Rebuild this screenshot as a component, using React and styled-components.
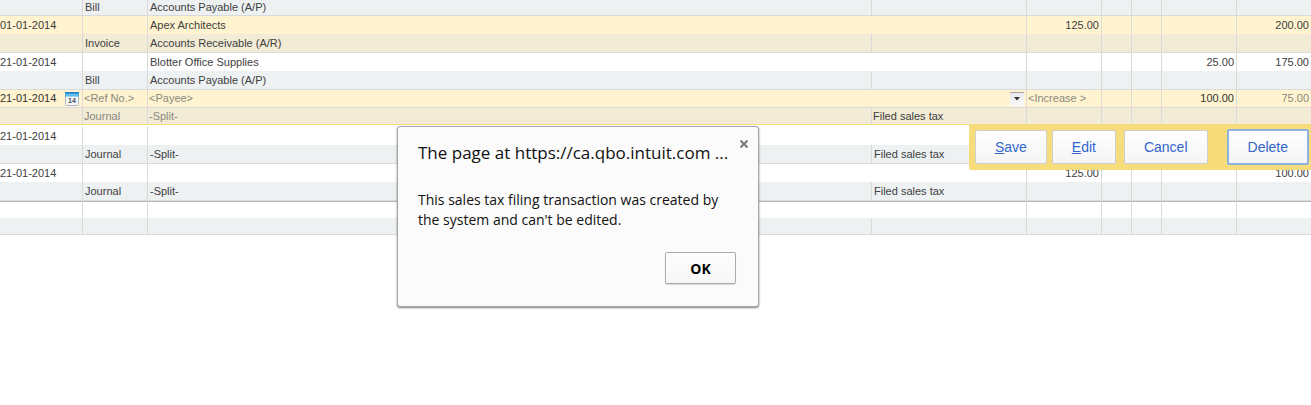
import React, { Fragment } from 'react';
import styled, { createGlobalStyle } from 'styled-components';

const GlobalStyle = createGlobalStyle`
  *, *::before, *::after {
    box-sizing: border-box;
  }

  body {
    margin: 0;
    background: #fff;
    color: #404040;
    font-family: "Liberation Sans", Arial, sans-serif;
    font-size: 11px;
    overflow-x: hidden;
  }
`;

const Page = styled.main`
  position: relative;
  min-height: 100vh;
`;

const Register = styled.table`
  width: 100%;
  table-layout: fixed;
  border-collapse: separate;
  border-spacing: 0;
`;

const Col = styled.col`
  width: ${({ $width }) => ($width ? `${$width}px` : 'auto')};
`;

const backgrounds = {
  plain: ['#fff', '#edf1f2'],
  selected: ['#fff4cf', '#f2ebd5'],
};

const Row = styled.tr`
  height: ${({ $height }) => $height || 18}px;
  line-height: ${({ $height }) => $height || 18}px;
  background: ${({ $tone = 'plain', $sub }) => backgrounds[$tone][$sub ? 1 : 0]};

  > td {
    border-bottom: ${({ $line }) => ($line ? `1px solid ${$line}` : '0')};
    border-top: ${({ $topLine }) => ($topLine ? `1px solid ${$topLine}` : '0')};
  }
`;

const Cell = styled.td`
  position: relative;
  padding: 0 2px;
  border-right: 1px solid #dadada;
  white-space: nowrap;
  text-align: ${({ $right }) => ($right ? 'right' : 'left')};
  color: ${({ $muted }) => ($muted ? '#8a8880' : 'inherit')};

  &:first-child {
    padding-left: 0;
  }

  &:last-child {
    border-right: 0;
  }
`;

const EditCell = styled(Cell)`
  padding: 0 2px 0 1px;
`;

const Field = styled.div`
  display: flex;
  align-items: center;
  gap: 4px;
  height: 17px;
`;

const DateField = styled(Field)`
  padding-right: 1px;
`;

const TextInput = styled.input`
  flex: 1;
  width: 100%;
  min-width: 0;
  height: 16px;
  padding: 0;
  border: 0;
  outline: 0;
  background: transparent;
  color: #333;
  font: inherit;
  text-align: ${({ $right }) => ($right ? 'right' : 'left')};

  &::placeholder {
    color: #8a8880;
    opacity: 1;
  }
`;

const IconButton = styled.button`
  display: flex;
  padding: 0;
  border: 0;
  background: transparent;
  cursor: pointer;
`;

const DropButton = styled(IconButton)`
  align-items: center;
  justify-content: center;
  width: 14px;
  height: 14px;
  border-top: 1px solid #a5a5a5;
  background: linear-gradient(#e9e9ee, #fbfbfb);
`;

const Divider = styled.td`
  height: 2px;
  padding: 0;
  border-bottom: 1px solid #dadada;
`;

const ActionBar = styled.div`
  position: absolute;
  top: 100%;
  right: 0;
  z-index: 1;
  display: flex;
  align-items: center;
  padding: 5px 2px 5px 6px;
  border-radius: 0 0 0 2px;
  background: #f6dc7a;
`;

const ActionButton = styled.button`
  height: ${({ $focused }) => ($focused ? 36 : 34)}px;
  margin-right: ${({ $gap = 0 }) => $gap}px;
  padding: 0 19px;
  border: ${({ $focused }) => ($focused ? '2px solid #8fb1dd' : '1px solid #cfcfd4')};
  border-radius: 2px;
  background: linear-gradient(#fff, #f4f4f4);
  color: #3366cc;
  font-family: inherit;
  font-size: 14px;
  cursor: pointer;
`;

const Dialog = styled.section`
  position: absolute;
  top: 126px;
  left: 397px;
  z-index: 2;
  width: 362px;
  padding: 14px 22px 22px 20px;
  border: 1px solid #a6a6a6;
  border-radius: 3px;
  background: #fbfbfb;
  box-shadow: 0 1px 2px rgba(0, 0, 0, 0.5);
  color: #111;
  font-family: "Open Sans", "Segoe UI", sans-serif;
`;

const DialogTitle = styled.h1`
  margin: 0;
  font-size: 17px;
  font-weight: 400;
  line-height: 24px;
  white-space: nowrap;
`;

const DialogText = styled.p`
  margin: 25px 0 22px;
  font-size: 14px;
  line-height: 20px;
`;

const DialogFooter = styled.footer`
  display: flex;
  justify-content: flex-end;
`;

const OkButton = styled.button`
  width: 71px;
  height: 32px;
  border: 1px solid #aaa;
  border-radius: 2px;
  background: linear-gradient(#fdfdfd, #f7f7f7);
  box-shadow: 0 1px 1px rgba(0, 0, 0, 0.15);
  color: #000;
  font-family: inherit;
  font-size: 14px;
  font-weight: 700;
`;

const CloseButton = styled(IconButton)`
  position: absolute;
  top: 13px;
  right: 10px;
`;

const lineColor = '#dadada';
const editLine = '#f6dc7a';

const columns = [83, 65, null, 155, 75, 30, 30, 75, 74];

const CalendarIcon = () => (
  <svg width="14" height="14" viewBox="0 0 14 14" aria-hidden="true">
    <rect x="0.5" y="1" width="13" height="12.5" rx="1" fill="#f3f5f8" stroke="#b3b8c0" />
    <rect x="0" y="0" width="14" height="4.5" fill="#45aee9" />
    <rect x="0" y="0" width="14" height="1.5" fill="#2782c8" />
    <path d="M1 3h12" stroke="#83d2f8" />
    <text x="7" y="11" textAnchor="middle" fontFamily="Liberation Sans" fontSize="7" fontWeight="700" fill="#4b5260">14</text>
  </svg>
);

const Transaction = ({ date, type, payee, account, memo, increase, decrease, balance, tone }) => (
  <tbody>
    <Row $tone={tone}>
      <Cell>{date}</Cell>
      <Cell />
      <Cell colSpan={2}>{payee}</Cell>
      <Cell $right>{increase}</Cell>
      <Cell />
      <Cell />
      <Cell $right>{decrease}</Cell>
      <Cell $right>{balance}</Cell>
    </Row>
    <DetailRow type={type} account={account} memo={memo} tone={tone} />
  </tbody>
);

const DetailRow = ({ type, account, memo, tone, height, line = lineColor }) => (
  <Row $sub $tone={tone} $height={height} $line={line}>
    <Cell />
    <Cell>{type}</Cell>
    <Cell>{account}</Cell>
    <Cell>{memo}</Cell>
    <Cell />
    <Cell />
    <Cell />
    <Cell />
    <Cell />
  </Row>
);

const Actions = () => (
  <ActionBar>
    <ActionButton type="button" $gap={5}><u>S</u>ave</ActionButton>
    <ActionButton type="button" $gap={8}><u>E</u>dit</ActionButton>
    <ActionButton type="button" $gap={19}>Cancel</ActionButton>
    <ActionButton type="button" $focused>Delete</ActionButton>
  </ActionBar>
);

const EditTransaction = () => (
  <tbody>
    <Row $tone="selected" $height={17} $line={lineColor}>
      <EditCell>
        <DateField>
          <TextInput aria-label="Date" defaultValue="21-01-2014" />
          <IconButton type="button" aria-label="Choose date"><CalendarIcon /></IconButton>
        </DateField>
      </EditCell>
      <EditCell>
        <Field><TextInput aria-label="Reference number" placeholder="<Ref No.>" /></Field>
      </EditCell>
      <EditCell colSpan={2}>
        <Field>
          <TextInput aria-label="Payee" placeholder="<Payee>" />
          <DropButton type="button" aria-label="Show payees">
            <svg width="6" height="4" viewBox="0 0 6 4" aria-hidden="true">
              <path d="M0 0h6L3 3.5z" fill="#333" />
            </svg>
          </DropButton>
        </Field>
      </EditCell>
      <EditCell>
        <Field><TextInput aria-label="Increase" placeholder="<Increase >" /></Field>
      </EditCell>
      <EditCell />
      <EditCell />
      <EditCell>
        <Field><TextInput aria-label="Decrease" defaultValue="100.00" $right /></Field>
      </EditCell>
      <EditCell $right $muted>75.00</EditCell>
    </Row>
    <Row $sub $tone="selected" $height={16} $line={editLine}>
      <EditCell />
      <EditCell $muted>Journal</EditCell>
      <EditCell $muted>-Split-</EditCell>
      <EditCell>Filed sales tax</EditCell>
      <EditCell />
      <EditCell />
      <EditCell />
      <EditCell />
      <EditCell>
        <Actions />
      </EditCell>
    </Row>
    <Row $height={2}>
      <Divider colSpan={9} />
    </Row>
  </tbody>
);

const BlankTransaction = () => (
  <tbody>
    <Row $height={17} $topLine="#b9b9b9">
      <Cell />
      <Cell />
      <Cell colSpan={2} />
      <Cell />
      <Cell />
      <Cell />
      <Cell />
      <Cell />
    </Row>
    <DetailRow height={17} />
  </tbody>
);

const Alert = () => (
  <Dialog role="alertdialog" aria-labelledby="alert-title" aria-describedby="alert-text">
    <DialogTitle id="alert-title">The page at https://ca.qbo.intuit.com ...</DialogTitle>
    <CloseButton type="button" aria-label="Close">
      <svg width="8" height="8" viewBox="0 0 8 8" aria-hidden="true">
        <path d="M0.5 0.5l7 7M7.5 0.5l-7 7" stroke="#777" strokeWidth="2" />
      </svg>
    </CloseButton>
    <DialogText id="alert-text">
      This sales tax filing transaction was created by the system and can't be edited.
    </DialogText>
    <DialogFooter>
      <OkButton type="button">OK</OkButton>
    </DialogFooter>
  </Dialog>
);

const App = () => (
  <Fragment>
    <GlobalStyle />
    <Page>
      <Register>
        <colgroup>
          {columns.map((width, i) => <Col key={i} $width={width} />)}
        </colgroup>
        <tbody>
          <DetailRow type="Bill" account="Accounts Payable (A/P)" height={15} />
        </tbody>
        <Transaction
          tone="selected"
          date="01-01-2014"
          type="Invoice"
          payee="Apex Architects"
          account="Accounts Receivable (A/R)"
          increase="125.00"
          balance="200.00"
        />
        <Transaction
          date="21-01-2014"
          type="Bill"
          payee="Blotter Office Supplies"
          account="Accounts Payable (A/P)"
          decrease="25.00"
          balance="175.00"
        />
        <EditTransaction />
        <Transaction date="21-01-2014" type="Journal" account="-Split-" memo="Filed sales tax" />
        <Transaction
          date="21-01-2014"
          type="Journal"
          account="-Split-"
          memo="Filed sales tax"
          increase="125.00"
          balance="100.00"
        />
        <BlankTransaction />
      </Register>
      <Alert />
    </Page>
  </Fragment>
);

export default App;
